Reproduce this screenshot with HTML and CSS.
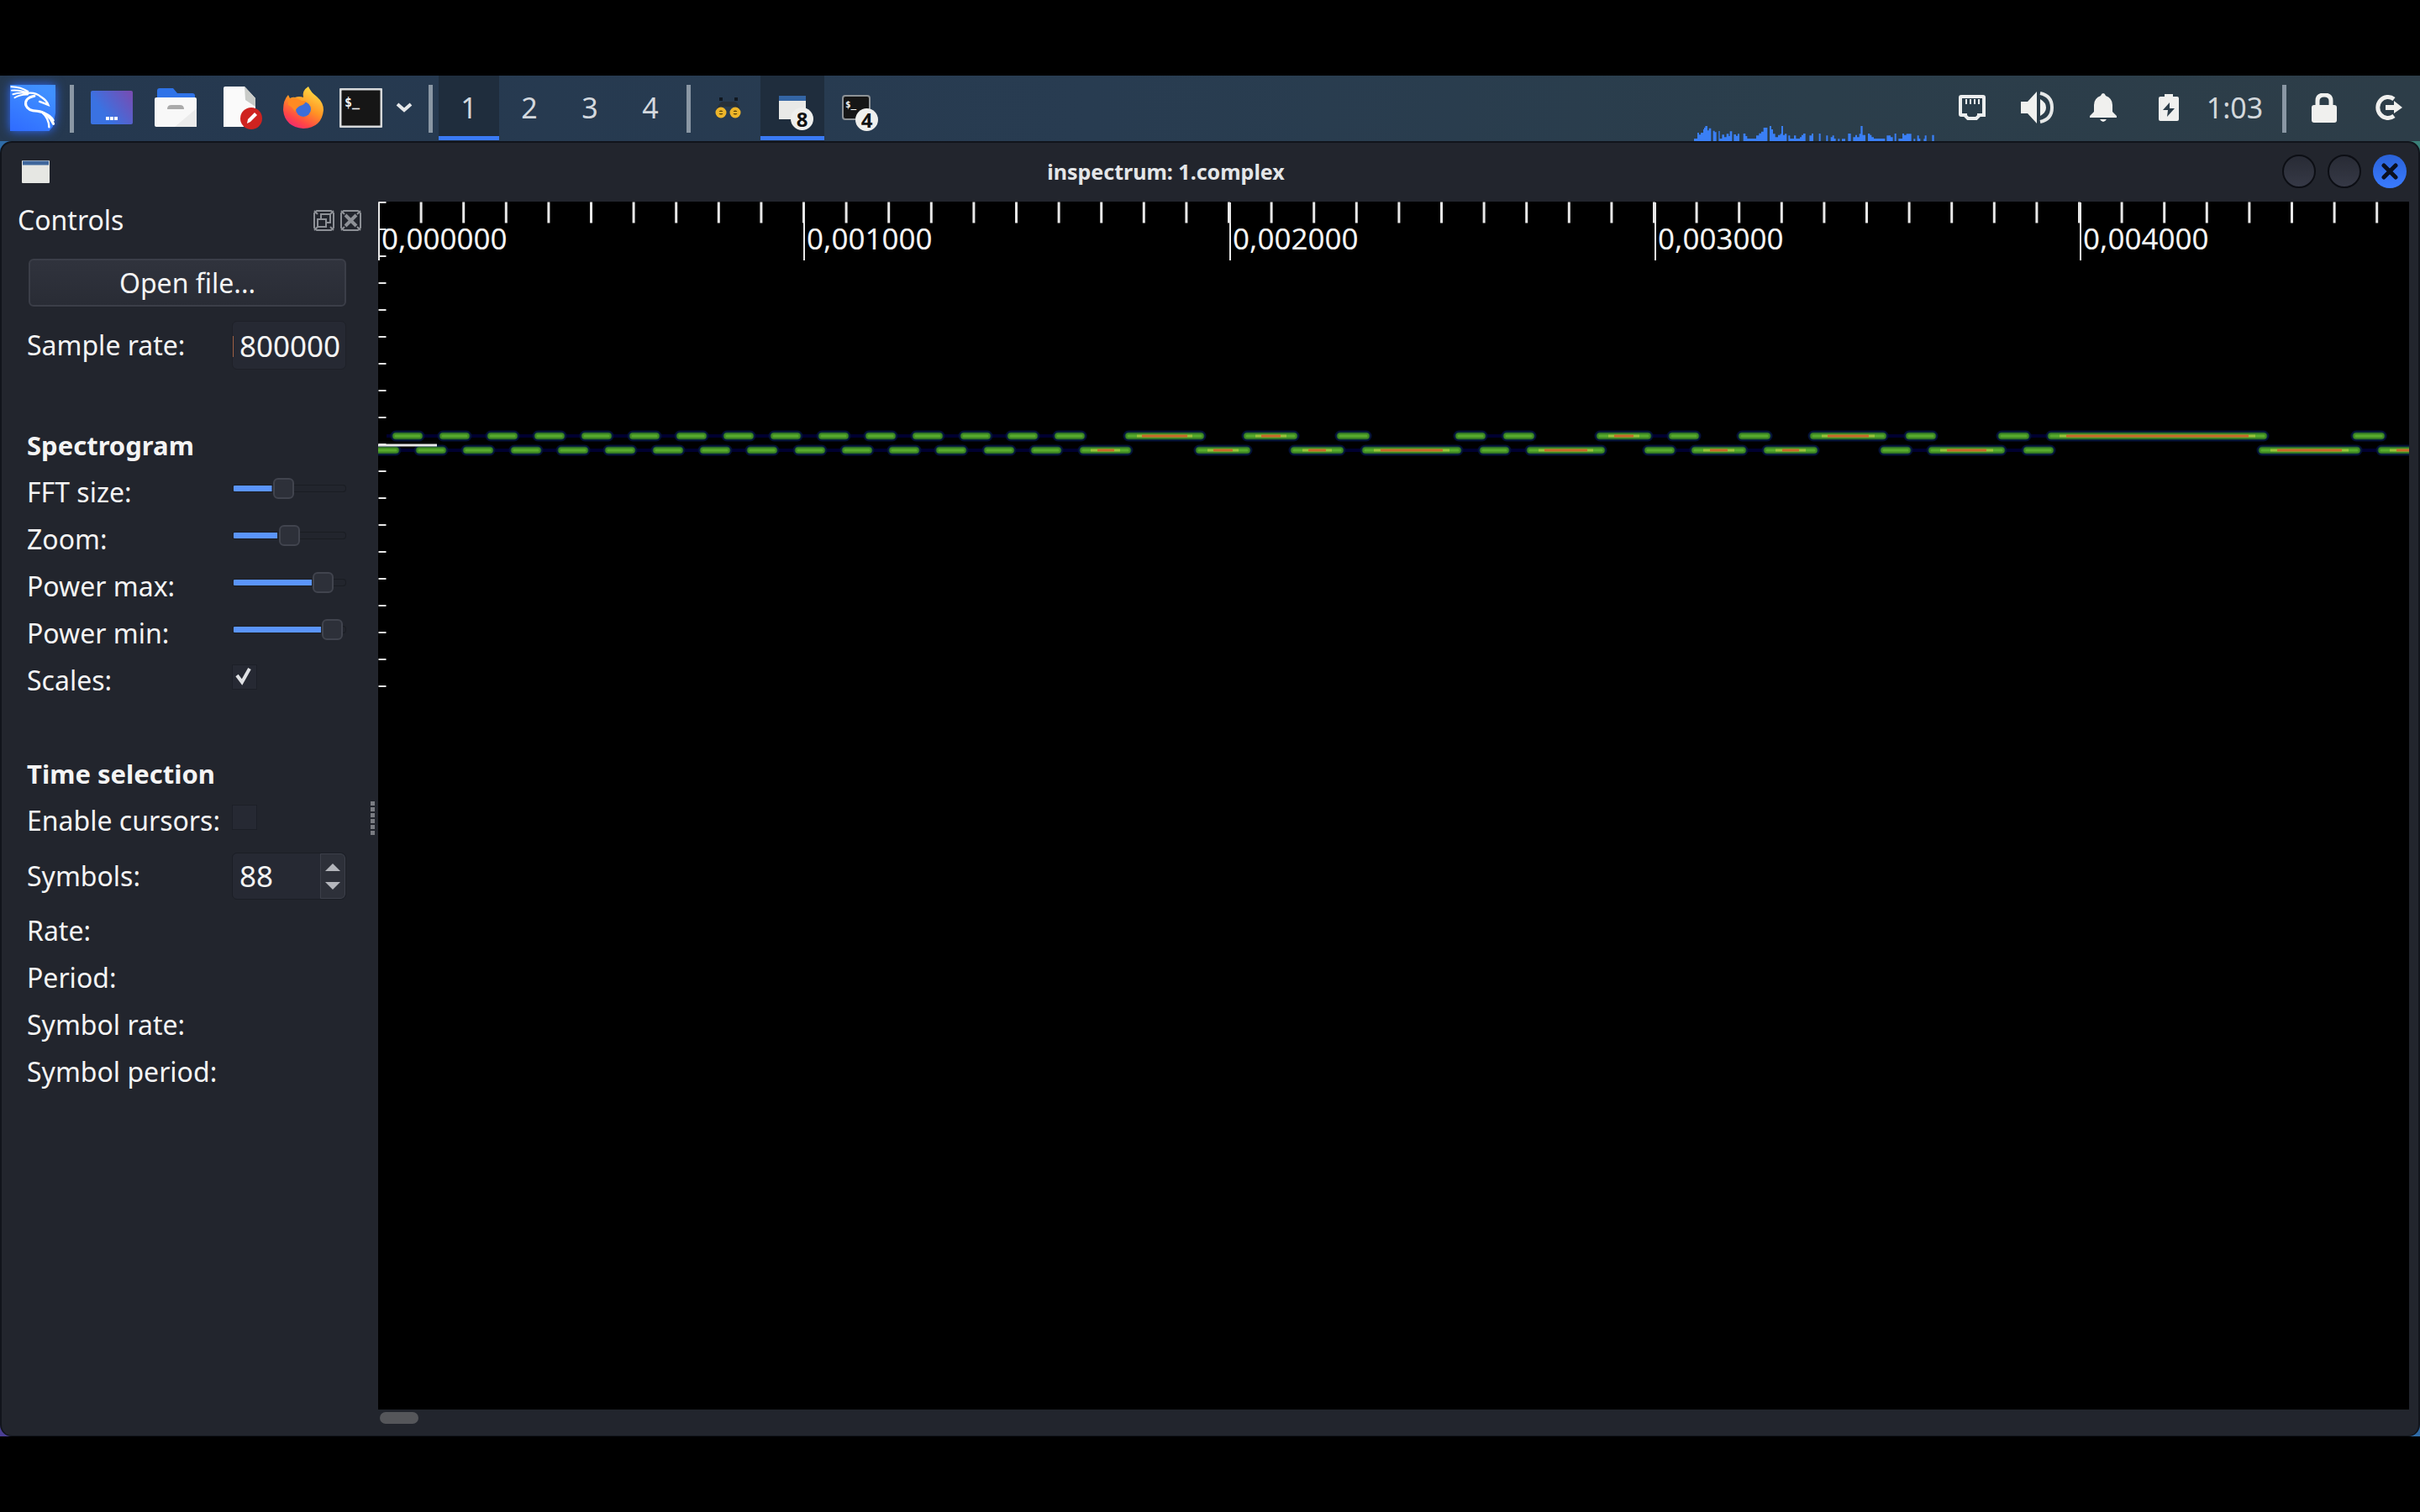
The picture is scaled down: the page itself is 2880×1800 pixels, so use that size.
FILE: index.html
```html
<!DOCTYPE html>
<html lang="en">
<head>
<meta charset="utf-8">
<title>inspectrum: 1.complex</title>
<link rel="stylesheet" href="styles.css">
</head>
<body>
<header class="panel">
  <button class="cell menu" aria-label="Applications">
    <svg class="kali" viewBox="0 0 157 166" preserveAspectRatio="none">
      <defs><linearGradient id="kg" x1="0" y1="1" x2=".5" y2="0"><stop offset="0" stop-color="#2f6bff"/><stop offset="1" stop-color="#4090ff"/></linearGradient></defs>
      <path d="M0 0H157V100L148 150 135 166H0Z" fill="url(#kg)"/>
      <g fill="none" stroke="#fff" stroke-linecap="round">
        <path d="M4 7Q38 8 62 24M6 20Q38 18 62 30M10 34Q38 24 62 33M16 46Q36 34 60 35" stroke-width="6"/>
        <path d="M60 30Q88 26 108 44Q126 56 132 72Q118 66 102 60" stroke-width="7"/>
        <path d="M84 40Q48 48 55 74Q62 94 94 94Q132 98 150 140" stroke-width="9"/>
        <path d="M112 100Q134 120 135 152M120 102Q142 110 150 128" stroke-width="7"/>
      </g>
    </svg>
  </button>
  <span class="sep"></span>
  <button class="cell" aria-label="Show desktop">
    <svg width="50" height="40" viewBox="0 0 50 40"><defs><linearGradient id="dg" x1="0" y1=".6" x2="1" y2="0"><stop offset=".2" stop-color="#3a72e2"/><stop offset="1" stop-color="#7a4bb0"/></linearGradient></defs><rect width="50" height="40" rx="2" fill="url(#dg)"/><path d="M18 33h14" stroke="#fff" stroke-width="4" stroke-dasharray="4 1"/></svg>
  </button>
  <button class="cell" aria-label="Files">
    <svg width="50" height="46" viewBox="0 0 50 46"><path d="M3 14V3Q3 0 6 0H22L27 6H45Q48 6 48 9V14Z" fill="#2f73e8"/><rect y="11" width="50" height="35" rx="2" fill="#f8f8f8"/><path d="M50 24V46H24Z" fill="#ebebeb"/><path d="M15 25Q15 20 20 20H30Q35 20 35 25Z" fill="#aaa"/></svg>
  </button>
  <button class="cell" aria-label="Text editor">
    <svg class="spill" width="38" height="50" viewBox="0 0 38 50"><path d="M0 2Q0 0 2 0H25L38 14V48H0Z" fill="#fafafa"/><path d="M25 0L38 14V24L26 16Z" fill="#c9cbc8"/><circle cx="33" cy="38" r="13" fill="#cf2320"/><path d="M28 44l1-5 8-8 3 3-8 8Z" fill="#fff"/></svg>
  </button>
  <button class="cell" aria-label="Firefox">
    <svg width="48" height="50" viewBox="0 0 48 50"><defs><linearGradient id="ff" x1=".8" y1=".1" x2=".3" y2="1"><stop offset="0" stop-color="#ffd842"/><stop offset=".45" stop-color="#ff9324"/><stop offset=".8" stop-color="#ff4646"/><stop offset="1" stop-color="#f02a70"/></linearGradient></defs>
    <path d="M30 0Q33 7 40 12Q48 19 48 28Q46 49 24 50Q2 48 0 28Q0 16 6 10L8 14Q12 12 14 13Q19 11 24 13Q22 5 30 0Z" fill="url(#ff)"/><circle cx="24" cy="27" r="9" fill="#3c6edb"/><path d="M6 15Q14 11 22 17Q27 17 27 18Q25 22 20 23Q15 26 14 30Q11 24 6 22Z" fill="#ff8a22"/></svg>
  </button>
  <button class="cell term" aria-label="Terminal">
    <svg width="51" height="47" viewBox="0 0 51 47"><rect x="1" y="1" width="49" height="45" rx="2" fill="#161616" stroke="#d6d8da" stroke-width="3"/><text x="6" y="22" font-size="15" class="mono">$_</text></svg>
  </button>
  <button class="cell chev" aria-label="More terminals">
    <svg width="20" height="12" viewBox="0 0 20 12"><path d="M2 2l8 7 8-7" fill="none" stroke="#e6e8ea" stroke-width="4"/></svg>
  </button>
  <span class="sep"></span>
  <nav class="desks">
    <button class="desk on">1</button><button class="desk">2</button><button class="desk">3</button><button class="desk">4</button>
  </nav>
  <span class="sep"></span>
  <button class="cell" aria-label="Task: gqrx">
    <svg width="32" height="28" viewBox="0 0 32 28"><path d="M2 20Q2 11 8 7H24Q30 11 30 20L22 13H10Z" fill="#26303a"/><path d="M5 4h4M23 4h4" stroke="#111820" stroke-width="4"/><g fill="#5d4508" stroke="#edb52a" stroke-width="4"><circle cx="7" cy="20" r="4.5"/><circle cx="24" cy="20" r="4.5"/></g><path d="M2 20h10M19 20h10" stroke="#edb52a" stroke-width="2"/></svg>
  </button>
  <button class="cell on" aria-label="Windows, 8">
    <span class="badged"><svg width="32" height="28" viewBox="0 0 32 28"><rect width="32" height="28" fill="#e9e9e7"/><rect width="32" height="6" fill="#3465a4"/></svg><b class="badge">8</b></span>
  </button>
  <button class="cell" aria-label="Terminals, 4">
    <span class="badged"><svg width="34" height="30" viewBox="0 0 34 30"><rect x="1" y="1" width="32" height="28" rx="3" fill="#161616" stroke="#8d9296" stroke-width="2"/><text x="4" y="15" font-size="11" class="mono">$_</text></svg><b class="badge">4</b></span>
  </button>
  <svg class="cpu" width="288" height="20" viewBox="0 0 864 60" aria-label="CPU graph"><path fill="#3a7ff5" d="M0 60V51H12V30H18V37H24V30H33V18H36V12H40V6H48V22H53V14H61V60ZM68 60V23H74V28H80V60ZM88 60V24H92V51H100V37H108V46H116V34H124V42H128V25H136V60ZM142 60V36H150V41H156V34H162V60ZM176 60V33H184V42H190V51H222V40H232V32H240V26H248V12H262V60ZM270 60V6H276V18H282V34H290V46H300V38H308V34H312V6H318V38H324V34H331V60ZM337 60V40H343V51H357V40H364V51H378V46H384V38H390V33H398V60ZM412 60V40H420V33H426V60ZM446 60V33H452V60ZM472 60V40H478V60ZM488 60V46H494V40H500V51H506V60ZM514 60V52H520V60ZM528 60V52H540V60ZM550 60V33H560V60ZM568 60V46H576V38H582V46H590V34H595V6H602V38H612V60ZM621 60V33H628V38H634V46H642V51H682V60ZM688 60V40H702V46H710V60ZM716 60V33H722V60ZM730 60V51H744V33H750V38H758V34H776V60ZM784 60V52H790V60ZM797 60V40H803V51H808V60ZM820 60V52H824V40H830V60ZM850 60V38H857V60Z"/></svg>
  <button class="cell tray" aria-label="Network"><svg width="32" height="30" viewBox="0 0 32 30"><path d="M3 2H29Q30 2 30 3V24H24V25L21 28H11L8 25V24H3Q2 24 2 23V3Q2 2 3 2Z" fill="none" stroke="#eceeee" stroke-width="4"/><path d="M8 8h17" stroke="#eceeee" stroke-width="6" stroke-dasharray="2 3"/></svg></button>
  <button class="cell tray" aria-label="Volume"><svg width="40" height="38" viewBox="0 0 40 38"><path d="M0 12H8L19 0V38L8 26H0Z" fill="#f0f1ef"/><path d="M23 9Q30 13 30 19T23 29Z" fill="#f0f1ef"/><path d="M23 2Q37 5 37 19T23 36" fill="none" stroke="#e6e8e8" stroke-width="4"/></svg></button>
  <button class="cell tray" aria-label="Notifications"><svg width="32" height="34" viewBox="0 0 32 34"><path d="M16 0Q18 0 19 3Q27 6 27 14V22L32 27V29H0V27L5 22V14Q5 6 13 3Q14 0 16 0ZM12 31H20Q18 34 16 34T12 31Z" fill="#f0f0ee"/></svg></button>
  <button class="cell tray" aria-label="Battery"><svg width="24" height="32" viewBox="0 0 24 32"><path fill-rule="evenodd" d="M7 0H17V3H22Q24 3 24 5V30Q24 32 22 32H2Q0 32 0 30V5Q0 3 2 3H7ZM13 10L5 19H11L10 27L19 17H13Z" fill="#f0f0ee"/></svg></button>
  <time class="clock">1:03</time>
  <span class="sep"></span>
  <button class="cell" aria-label="Lock"><svg width="30" height="35" viewBox="0 0 30 35"><path d="M7 16V9Q7 2 15 2T23 9V16" fill="none" stroke="#f0f0ee" stroke-width="5"/><rect y="14" width="30" height="21" rx="3" fill="#f0f0ee"/></svg></button>
  <button class="cell" aria-label="Log out"><svg width="34" height="30" viewBox="0 0 34 30"><path d="M24 5A12 12.500 0 1 0 24 25" fill="none" stroke="#f0f0ee" stroke-width="5"/><path d="M14 12H24V7L34 15L24 22V18H14Z" fill="#f0f0ee"/></svg></button>
</header>

<main class="desktop">
<section class="window">
  <div class="titlebar">
    <svg width="33" height="27" viewBox="0 0 33 27"><rect width="33" height="27" rx="1" fill="#e6e7e3"/><path d="M1 3h31" stroke="#3f679c" stroke-width="5"/></svg>
    <h1 class="title">inspectrum: 1.complex</h1>
    <div class="winbtns">
      <button class="wb" aria-label="Minimize"></button>
      <button class="wb" aria-label="Maximize"></button>
      <button class="wb close" aria-label="Close"><svg width="20" height="20" viewBox="0 0 20 20"><path d="M3 3L17 17M17 3L3 17" stroke="#0b1020" stroke-width="5" stroke-linecap="round"/></svg></button>
    </div>
  </div>
  <div class="work">
    <form class="dock">
      <div class="dockhead">
        <h2 class="docktitle">Controls</h2>
        <button type="button" class="db" aria-label="Float"><svg width="25" height="25" viewBox="0 0 25 25"><path d="M4 1H21L24 4V21L21 24H4L1 21V4Z"/><path d="M1 1l4 4M24 1l-4 4M1 24l4-4M24 24l-4-4"/><path d="M9 11V5H20V15H15M5 11H15V20H5Z"/></svg></button>
        <button type="button" class="db" aria-label="Close dock"><svg width="25" height="25" viewBox="0 0 25 25"><path d="M4 1H21L24 4V21L21 24H4L1 21V4Z"/><path d="M1 1l4 4M24 1l-4 4M1 24l4-4M24 24l-4-4"/><path d="M6 6L19 19M19 6L6 19" stroke-width="4"/></svg></button>
      </div>
      <button type="button" class="open">Open file...</button>
      <div class="row tall"><label for="sr">Sample rate:</label><input id="sr" class="field rate" type="text" value="1800000"></div>
      <h3 class="group">Spectrogram</h3>
      <div class="row"><label for="fft">FFT size:</label><input id="fft" class="slider" type="range" min="0" max="1000" value="446" style="--v:.446"></div>
      <div class="row"><label for="zm">Zoom:</label><input id="zm" class="slider" type="range" min="0" max="1000" value="509" style="--v:.509"></div>
      <div class="row"><label for="pmax">Power max:</label><input id="pmax" class="slider" type="range" min="0" max="1000" value="874" style="--v:.874"></div>
      <div class="row"><label for="pmin">Power min:</label><input id="pmin" class="slider" type="range" min="0" max="1000" value="977" style="--v:.977"></div>
      <div class="row"><label for="sc">Scales:</label><span class="tick"><input id="sc" class="box" type="checkbox" checked><svg class="mark" width="20" height="22" viewBox="0 0 20 22"><path d="M2 10L8 18L17 2" fill="none" stroke="#dfe1e4" stroke-width="4"/></svg></span></div>
      <h3 class="group">Time selection</h3>
      <div class="row"><label for="ec">Enable cursors:</label><span class="tick"><input id="ec" class="box" type="checkbox"></span></div>
      <div class="row spinrow"><label for="sy">Symbols:</label><span class="spin"><input id="sy" class="num" type="number" value="88"><span class="steps"><button type="button" class="st" aria-label="Increase"><svg width="18" height="9" viewBox="0 0 18 9"><path d="M9 0L18 9H0Z"/></svg></button><button type="button" class="st down" aria-label="Decrease"><svg width="18" height="9" viewBox="0 0 18 9"><path d="M9 9L18 0H0Z"/></svg></button></span></span></div>
      <div class="row">Rate:</div>
      <div class="row">Period:</div>
      <div class="row">Symbol rate:</div>
      <div class="row">Symbol period:</div>
    </form>
    <div class="splitter"><span class="grip"></span></div>
    <div class="view">
      <svg class="plot" width="100%" height="100%">
        <defs>
          <path id="runs" d="M-8 296H21M49 296H77M105 296H133M162 296H190M218 296H246M274 296H302M331 296H359M387 296H415M443 296H471M500 296H528M556 296H584M612 296H640M668 296H696M725 296H753M781 296H809M839 296H892
          M21 279H49M77 279H105M134 279H162M190 279H218M246 279H274M303 279H331M359 279H387M415 279H443M471 279H499M528 279H556M584 279H612M640 279H668M697 279H725M753 279H781M809 279H837
          M893 279H979M1034 279H1090M1145 279H1176M1286 279H1314M1343 279H1372M1454 279H1511M1540 279H1568M1623 279H1653M1708 279H1791M1822 279H1850M1932 279H1961M1991 279H2244M2354 279H2384
          M977 296H1034M1090 296H1145M1175 296H1285M1315 296H1342M1371 296H1456M1511 296H1539M1567 296H1624M1653 296H1709M1792 296H1820M1849 296H1932M1962 296H1990M2242 296H2355M2384 296H2440"/>
        </defs>
        <path d="M10 279H834M1290 279H1374M1458 279H1570M1712 279H1852M1936 279H2240" stroke="#000030" stroke-width="4"/>
        <path d="M0 296H890M1094 296H1455M1515 296H1705M1796 296H1990M2246 296H2417" stroke="#000030" stroke-width="4"/>
        <g fill="none" stroke-linecap="round">
          <use href="#runs" stroke="#041038" stroke-width="13"/>
          <use href="#runs" stroke="#174a35" stroke-width="9"/>
          <use href="#runs" stroke="#418a22" stroke-width="7"/>
          <use href="#runs" stroke="#58ab2e" stroke-width="3"/>
        </g>
        <path d="M903 279H969M1044 279H1081M1464 279H1501M1718 279H1781M2001 279H2234M848 296H883M987 296H1024M1100 296H1135M1185 296H1275M1381 296H1446M1577 296H1614M1663 296H1699M1859 296H1922M2252 296H2345M2394 296H2440" stroke="#9ac03a" stroke-width="3"/>
        <path d="M909 279H963M1051 279H1074M1471 279H1494M1725 279H1774M2009 279H2226M856 296H876M994 296H1017M1107 296H1128M1193 296H1267M1388 296H1439M1585 296H1606M1671 296H1691M1867 296H1914M2260 296H2337M2402 296H2440" stroke="#c8682a" stroke-width="3"/>
        <g stroke="#e8e8e8">
          <path d="M0 13H2440" stroke-width="25" stroke-dasharray="3 47.600" stroke-dashoffset="1"/>
          <path d="M1 1V70M507 1V70M1014 1V70M1520 1V70M2026 1V70" stroke-width="2"/>
          <path d="M5 0V580" stroke-width="9" stroke-dasharray="2 30"/>
          <path d="M0 290H70" stroke-width="3"/>
        </g>
        <g class="scale">
          <text x="4" y="57">0,000000</text><text x="510" y="57">0,001000</text><text x="1017" y="57">0,002000</text><text x="1523" y="57">0,003000</text><text x="2029" y="57">0,004000</text>
        </g>
      </svg>
      <div class="scroll"><span class="thumb"></span></div>
    </div>
  </div>
</section>
</main>
</body>
</html>
```
FILE: styles.css
```css
* { box-sizing: border-box; }
body {
  margin: 0;
  min-height: 100vh;
  padding: 90px 0;
  background: #000;
  color: #f4f4f4;
  font: 32px/56px "Noto Sans", sans-serif;
  display: flex;
  flex-direction: column;
  overflow: hidden;
}
button, input { font: inherit; color: inherit; margin: 0; padding: 0; border: 0; background: none; }
h1, h2, h3 { margin: 0; font-size: inherit; }
svg { display: block; flex: none; }
.mono { font-family: "DejaVu Sans Mono", monospace; font-weight: bold; fill: #f2f2f2; }

/* top panel */
.panel {
  display: flex;
  align-items: center;
  height: 78px;
  background: linear-gradient(90deg, #25384f, #283c51 45%, #2b3e4b 75%, #2d3d48);
}
.cell { width: 76px; height: 78px; display: flex; align-items: center; justify-content: center; flex: none; padding-bottom: 2px; }
.menu { width: 78px; }
.kali { width: 54px; height: 55px; filter: drop-shadow(0 0 6px #2f6bff); }
.spill { overflow: visible; }
.term { width: 60px; }
.chev { width: 44px; }
.tray { width: 78px; }
.sep { width: 5px; height: 57px; margin: 0 7px; background: #8a97a4; flex: none; }
.menu + .sep { margin-left: 5px; }
.desks { display: flex; }
.desk { width: 72px; height: 78px; padding-bottom: 3px; color: #d3d8de; font-size: 34px; }
.on { background: linear-gradient(#3a7af5, #3a7af5) 0 72px / 100% 5px no-repeat #1f2d3d; }
.badged { position: relative; }
.badge {
  position: absolute;
  right: -9px;
  bottom: -13px;
  width: 27px;
  height: 27px;
  border-radius: 50%;
  background: #efefed;
  color: #111;
  font-size: 24px;
  line-height: 27px;
  text-align: center;
}
.cpu { margin-left: auto; margin-right: 4px; align-self: flex-end; }
.clock { width: 89px; padding: 0 10px 2px 0; text-align: center; color: #d3d8dc; font-size: 34px; flex: none; }

/* window */
.desktop {
  flex: 1;
  display: flex;
  background: linear-gradient(90deg, #2f6ca8 50%, #3a8078 50%) top / 100% 50% no-repeat, linear-gradient(90deg, #4a3f95 50%, #2f6ca8 50%);
}
.window {
  flex: 1;
  display: flex;
  flex-direction: column;
  background: #22252d;
  border: 2px solid #11141b;
  border-bottom-width: 1px;
  border-radius: 14px;
  padding: 0 11px 0 2px;
}
.titlebar { height: 70px; display: flex; align-items: center; gap: 9px; padding: 0 3px 2px 22px; }
.title { flex: 1; text-align: center; font-size: 25px; color: #e4e6e8; }
.winbtns { display: flex; gap: 14px; }
.wb { width: 40px; height: 40px; border-radius: 50%; border: 2px solid #0c0e14; background: linear-gradient(#282b35, #363946); display: flex; align-items: center; justify-content: center; }
.wb.close { border-color: transparent; background: linear-gradient(#2a62d8, #3a7bff) border-box; }
.work { flex: 1; display: flex; }

/* dock */
.dock { width: 408px; padding: 0 0 0 28px; flex: none; display: flex; flex-direction: column; }
.dockhead { display: flex; align-items: center; gap: 7px; height: 44px; margin: 0 -18px 0 -11px; }
.docktitle { flex: 1; font-weight: normal; }
.db svg { fill: none; stroke: #8d9096; stroke-width: 2; }
.open {
  height: 57px;
  margin: 24px 0 17px 2px;
  border: 2px solid #3b3e48;
  border-radius: 6px;
  background: linear-gradient(#30333d, #292c35);
  line-height: 50px;
}
.row { display: flex; align-items: center; justify-content: space-between; height: 56px; white-space: nowrap; }
.tall { height: 58px; }
.field { width: 136px; height: 58px; border: 1px solid #1e2028; border-radius: 6px; background: #262933; outline: none; }
.rate { direction: rtl; padding: 0 6px 0 0; font-size: 35px; }
.group { margin-top: 55px; height: 56px; font-size: 31px; }
.tall + .group { margin-top: 62px; }
.slider {
  appearance: none;
  width: 136px;
  height: 26px;
  margin-bottom: 9px;
  background:
    linear-gradient(#5b95fb, #5b95fb) 2px 9px / calc((100% - 25px) * var(--v) - 4px) 7px no-repeat;
}
.slider::-webkit-slider-runnable-track { height: 9px; border: 1px solid #1a1d23; border-left: 0; border-radius: 4px; background: none; }
.slider::-webkit-slider-thumb {
  appearance: none;
  width: 25px;
  height: 25px;
  margin-top: -9px;
  border: 2px solid #41444e;
  border-radius: 6px;
  background: #2d3039;
}
.tick { position: relative; width: 136px; height: 30px; margin-bottom: 9px; }
.box { appearance: none; display: block; width: 30px; height: 30px; border: 1px solid #1c1f27; background: #262933; }
.mark { position: absolute; left: 4px; top: 3px; pointer-events: none; }
.spinrow { margin: 10px 0 9px; }
.spin { width: 136px; height: 56px; display: flex; border: 1px solid #1b1e25; border-radius: 6px; background: #262933; overflow: hidden; }
.num { flex: 1; min-width: 0; padding-left: 8px; outline: none; appearance: textfield; font-size: 35px; }
.num::-webkit-inner-spin-button { display: none; }
.steps { width: 30px; display: flex; flex-direction: column; border: 1px solid #3d404a; border-radius: 0 6px 6px 0; background: #2d3039; }
.st { flex: 1; display: flex; align-items: flex-end; justify-content: center; padding-bottom: 7px; }
.st.down { align-items: flex-start; padding: 6px 0 0; }
.st svg { fill: #b4b6bc; }
.splitter { width: 38px; display: flex; justify-content: flex-end; padding: 714px 4px 0 0; flex: none; }
.grip { width: 5px; height: 40px; background: repeating-linear-gradient(#7a7c82 0 5px, transparent 5px 7px); }

/* spectrogram */
.view { flex: 1; min-width: 0; display: flex; flex-direction: column; }
.plot { flex: 1; min-height: 0; background: #000; }
.scale { fill: #f4f4f4; font-size: 35px; }
.scroll { height: 31px; padding: 3px 2px; }
.thumb { display: block; width: 46px; height: 14px; border-radius: 7px; background: #55565a; }
```
